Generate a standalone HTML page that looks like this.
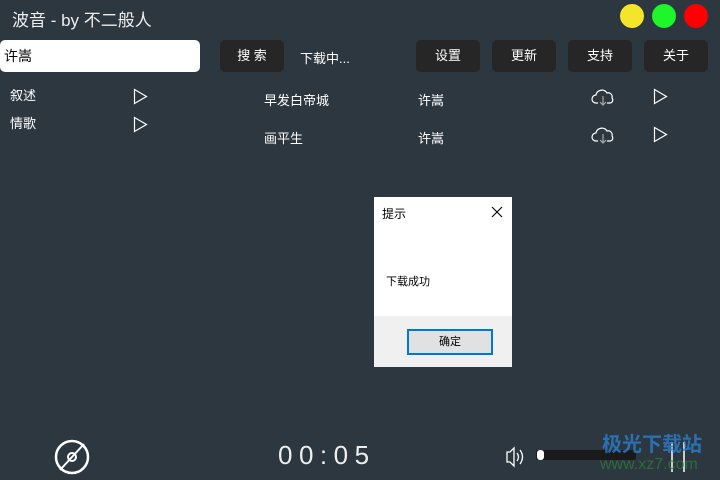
<!DOCTYPE html>
<html><head><meta charset="utf-8"><style>
body{margin:0;width:720px;height:480px;background:#2c3740;position:relative;overflow:hidden;font-family:"Liberation Sans","Noto Sans CJK SC",sans-serif;color:#fff}
.a{position:absolute}
.btn{position:absolute;top:40px;height:32px;background:#262626;border-radius:5px;font-size:13px;line-height:32px;text-align:center}
.t{font-size:13px;position:absolute}
.dot{position:absolute;top:4px;width:24px;height:24px;border-radius:50%}
</style></head><body>
<div class="a" style="left:12px;top:6px;font-size:17px;color:#eee">波音 - by 不二般人</div>
<div class="dot" style="left:620px;background:#f4e52a"></div>
<div class="dot" style="left:652px;background:#1ef52a"></div>
<div class="dot" style="left:684px;background:#ff0000"></div>
<div class="a" style="left:0;top:40px;width:200px;height:32px;background:#fff;border-radius:5px;color:#000;font-size:14px;line-height:32px;text-indent:4px">许嵩</div>
<div class="btn" style="left:220px;width:64px">搜 索</div>
<div class="t" style="left:300px;top:48px">下载中...</div>
<div class="btn" style="left:416px;width:64px">设置</div>
<div class="btn" style="left:492px;width:64px">更新</div>
<div class="btn" style="left:568px;width:64px">支持</div>
<div class="btn" style="left:644px;width:64px">关于</div>
<div class="t" style="left:10px;top:85px">叙述</div>
<div class="t" style="left:10px;top:113px">情歌</div>
<svg class="a" style="left:0;top:0" width="720" height="480" fill="none" stroke="#fff" stroke-width="1.2">
<path d="M134.5 89.5v14l12-7z"/><path d="M134.5 117.5v14l12-7z"/>
<path d="M654.5 89.5v14l12-7z"/><path d="M654.5 127.5v14l12-7z"/>
<g id="c"><path d="M598 103h-2a4 4 0 0 1 0-8 6 6 0 0 1 11-2 4 4 0 0 1 5 5 3 3 0 0 1-2 5h-3"/><path d="M603 96v9m-3-3 3 3 3-3" stroke="#aaa"/></g>
<use href="#c" y="38"/>
<circle cx="72" cy="457" r="16" stroke-width="2.5"/><circle cx="72" cy="457" r="4" stroke-width="2"/><path d="M60 470 84 444" stroke-width="2"/>
<path d="M507 452h3l4-4v18l-4-4h-3z M517 453q3 4 0 8 M520 450q5 7 0 14" stroke-width="1.3"/>
<path d="M672 442v30M684 442v30" stroke-width="1.5"/>
</svg>
<div class="t" style="left:264px;top:90px">早发白帝城</div>
<div class="t" style="left:264px;top:128px">画平生</div>
<div class="t" style="left:418px;top:90px">许嵩</div>
<div class="t" style="left:418px;top:128px">许嵩</div>
<div class="a" style="left:278px;top:440px;font-size:26px;letter-spacing:6.5px;color:#eee">00:05</div>
<div class="a" style="left:536px;top:450px;width:100px;height:10px;background:#1a1a1a;border-radius:2px"></div>
<div class="a" style="left:537px;top:450px;width:7px;height:10px;background:#fff;border-radius:3px"></div>
<div class="a" style="left:374px;top:197px;width:138px;height:170px;background:#fff;color:#000">
<div class="a" style="left:8px;top:8px;font-size:12px">提示</div>
<svg class="a" style="left:117px;top:9px" width="12" height="12"><path d="M1 1 11 11M11 1 1 11" stroke="#000" stroke-width="1.1"/></svg>
<div class="a" style="left:12px;top:76px;font-size:11px">下载成功</div>
<div class="a" style="left:0;top:119px;width:138px;height:51px;background:#f0f0f0"></div>
<div class="a" style="left:33px;top:132px;width:82px;height:22px;background:#e1e1e1;border:2px solid #0078d7;font-size:11px;text-align:center;line-height:22px">确定</div>
</div>
<div class="a" style="left:602px;top:428px;font-size:20px;font-weight:bold;color:#2a7fd0;opacity:.8">极光下载站</div>
<div class="a" style="left:600px;top:456px;font-size:16px;color:#2e7a3a;opacity:.8">www.xz7.com</div>
</body></html>
